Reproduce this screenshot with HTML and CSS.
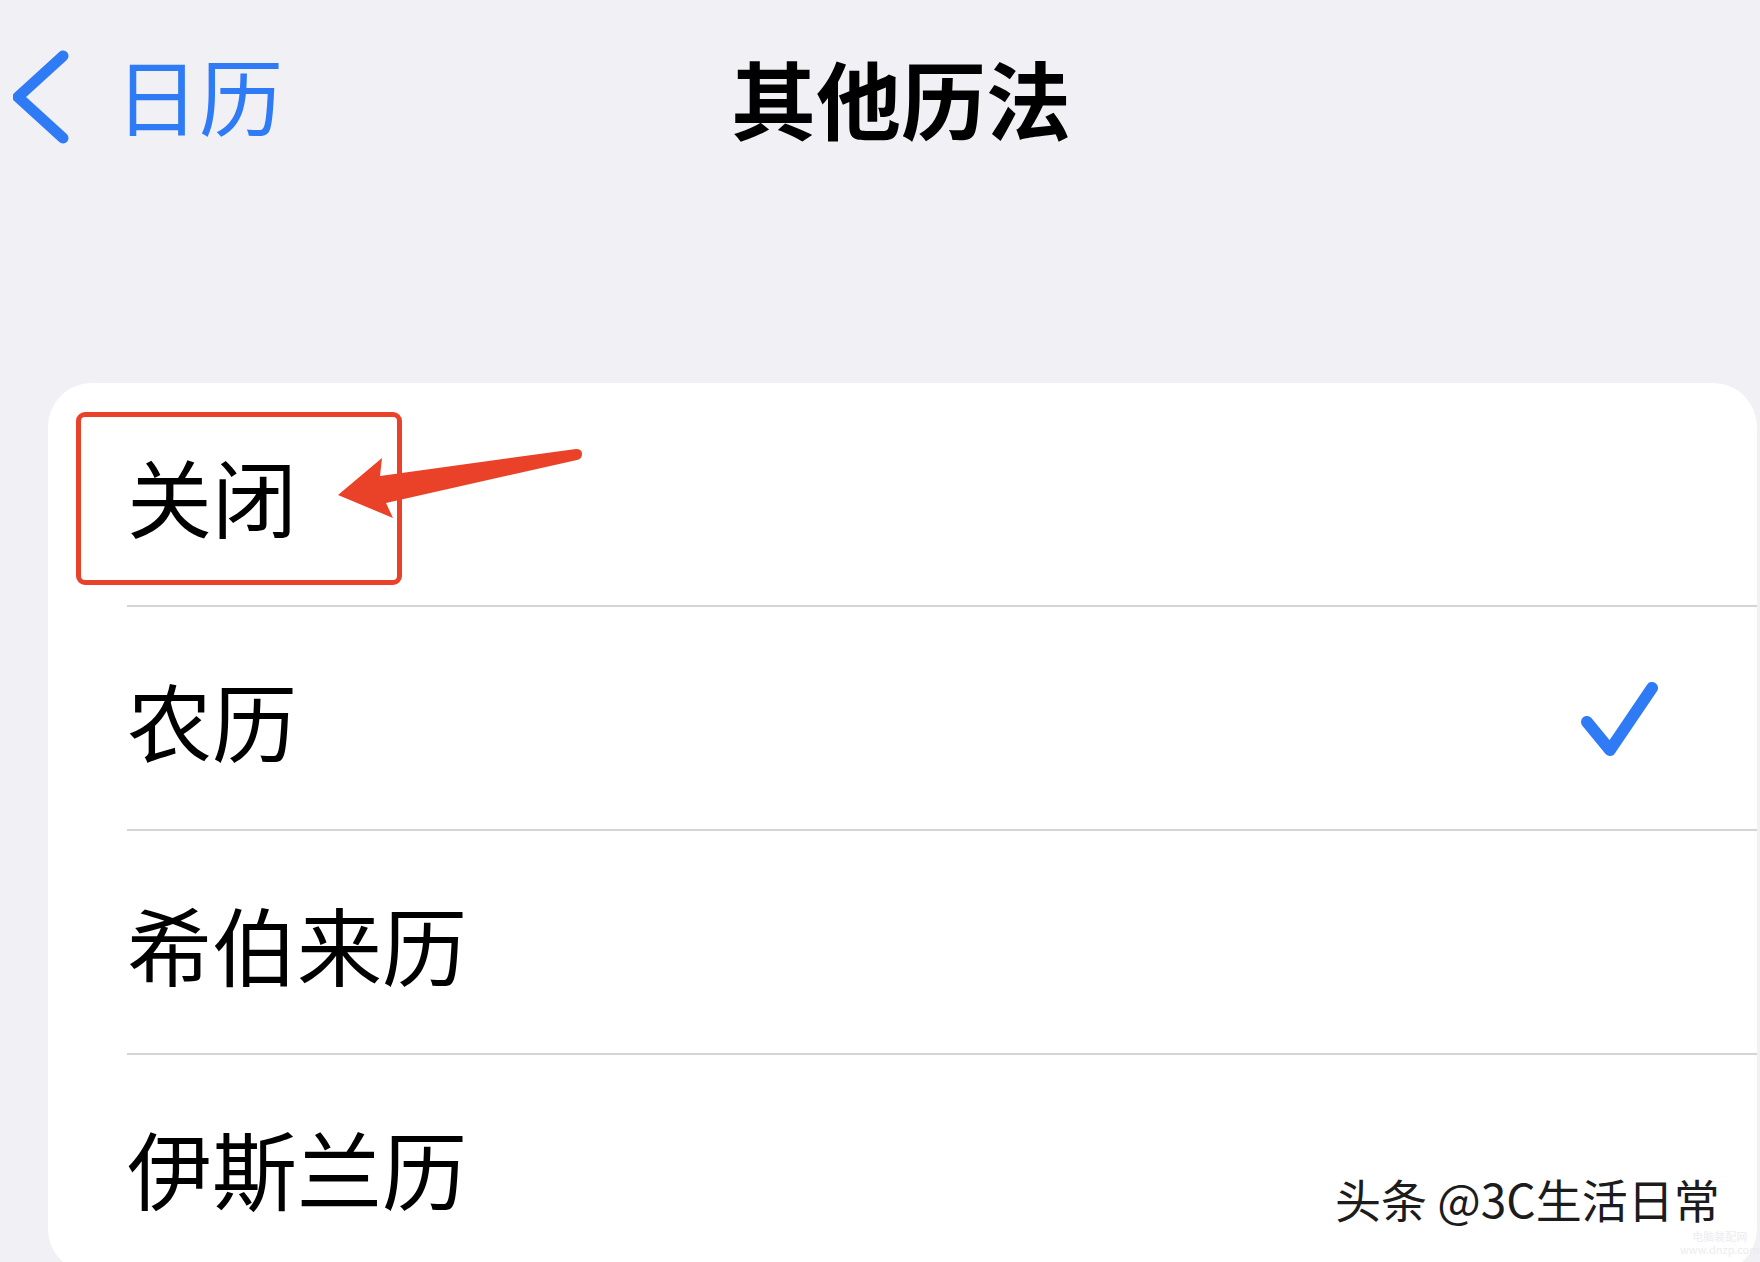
FILE: index.html
```html
<!DOCTYPE html>
<html lang="zh-CN">
<head>
    <meta charset="UTF-8">
    <title>其他历法</title>
    <link rel="stylesheet" href="styles.css">
</head>
<body>
    <div class="nav">
        <svg class="back" width="80" height="100" viewBox="0 0 80 100">
            <path d="M50 8 L5 49 L50 90" />
        </svg>
        <span class="back-text">日历</span>
        <span class="title">其他历法</span>
    </div>

    <div class="card">
        <div class="row"><div class="row-inner">关闭</div></div>
        <div class="row">
            <div class="row-inner">
                农历
                <svg class="check" width="80" height="80" viewBox="0 0 80 80">
                    <path d="M8 41 L31 69 L73 7" />
                </svg>
            </div>
        </div>
        <div class="row"><div class="row-inner">希伯来历</div></div>
        <div class="row"><div class="row-inner">伊斯兰历</div></div>

        <!-- 标注 -->
        <div class="mark-box"></div>
        <svg class="mark-arrow" width="560" height="160" viewBox="0 0 560 160">
            <path d="M290 112 L334 75 L332 93 L528 66 Q534 66 534 71 Q534 76 529 77 L338 120 L345 135 Z" />
        </svg>

        <div class="wm">头条 @3C生活日常</div>
        <div class="wm-small">电脑装配网<br>www.dnzp.com</div>
    </div>
</body>
</html>
```

FILE: styles.css
```css
html, body{
    margin: 0;
    padding: 0;
    height: 1262px;
    overflow: hidden;
}
body{
    background-color: #f0f0f5;
    font-family: "Noto Sans CJK SC", "Noto Sans", sans-serif;
    color: #000;
}
.nav{
    display: flex;
    align-items: center;
    height: 190px;
    padding-left: 13px;
}
.back{
    fill: none;
    stroke: #2f7bf6;
    stroke-width: 11;
    stroke-linecap: round;
    stroke-linejoin: round;
    margin-top: 6px;
}
.back-text{
    margin-left: 22px;
    font-size: 84px;
    color: #2f7bf6;
    margin-top: -3px;
}
.title{
    margin-left: 448px;
    font-size: 85px;
    font-weight: 700;
    margin-top: 2px;
}
.card{
    position: relative;
    margin: 193px 3px 0 48px;
    background-color: #fff;
    border-radius: 44px;
    height: 890px;
}
.row{
    padding-left: 79px;
}
.row-inner{
    display: flex;
    align-items: center;
    height: 222px;
    border-bottom: 2px solid #d4d4d9;
    font-size: 85px;
    line-height: 1;
}
.row:last-of-type .row-inner{
    border-bottom: none;
}
.check{
    margin-left: auto;
    margin-right: 98px;
    margin-top: 6px;
    fill: none;
    stroke: #2f7bf6;
    stroke-width: 12;
    stroke-linecap: round;
    stroke-linejoin: round;
}
.mark-box{
    position: absolute;
    left: 28px;
    top: 29px;
    width: 316px;
    height: 163px;
    border: 5px solid #ea4228;
    border-radius: 9px;
}
.mark-arrow{
    position: absolute;
    left: 0;
    top: 0;
    fill: #ea4228;
}
.wm{
    position: absolute;
    left: 1287px;
    top: 792px;
    font-size: 46px;
    line-height: 1;
    color: #1c1c1c;
    text-shadow: 1px -1px 0 rgba(255, 255, 255, 0.6);
    white-space: nowrap;
}
.wm-small{
    position: absolute;
    left: 1632px;
    top: 847px;
    font-size: 11px;
    line-height: 13px;
    color: #ececef;
    text-align: center;
}
```
